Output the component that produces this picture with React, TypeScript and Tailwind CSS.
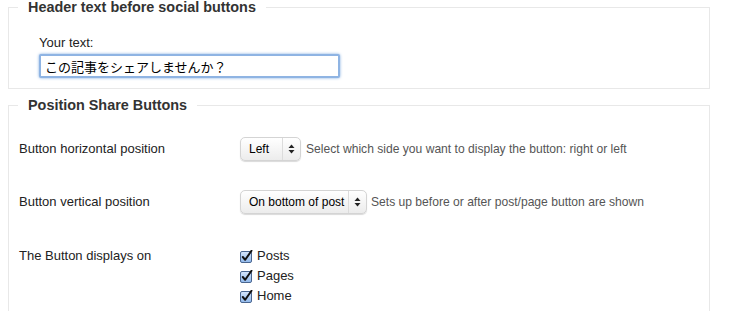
import React from 'react';

const font = { fontFamily: '"Liberation Sans", Arial, "Noto Sans CJK JP", sans-serif' };

function Select({ value, width }: { value: string; width: string }) {
  return (
    <div
      className={`flex h-[24px] ${width} shrink-0 items-center whitespace-nowrap rounded-[5px] border border-[#d4d4d4] bg-gradient-to-b from-white to-[#ececec] shadow-[0_1px_1px_rgba(0,0,0,0.15)] text-[12px] text-black`}
    >
      <span className="flex-1 pl-[8px] leading-[22px]">{value}</span>
      <span className="flex h-full w-[18px] flex-col items-center justify-center border-l border-[#dcdcdc]">
        <svg width="7" height="10" viewBox="0 0 7 10">
          <path d="M3.5 0.5 L6.5 4 L0.5 4 Z" fill="#222" />
          <path d="M3.5 9.5 L6.5 6 L0.5 6 Z" fill="#222" />
        </svg>
      </span>
    </div>
  );
}

function Checkbox({ label }: { label: string }) {
  return (
    <label className="flex h-[20px] items-center gap-[4px] text-[13px] text-[#222]">
      <svg width="13" height="13" viewBox="0 0 13 13">
        <defs>
          <linearGradient id="cb" x1="0" y1="0" x2="0" y2="1">
            <stop offset="0" stopColor="#d6e6fb" />
            <stop offset="1" stopColor="#8fb7ea" />
          </linearGradient>
        </defs>
        <rect x="0.5" y="1.5" width="11" height="11" rx="1.5" fill="url(#cb)" stroke="#4a6690" />
        <path d="M2.8 7 L5.2 9.8 L11.5 0.8" fill="none" stroke="#111" strokeWidth="2" strokeLinejoin="round" strokeLinecap="round" />
      </svg>
      <span>{label}</span>
    </label>
  );
}

export default function App() {
  return (
    <div className="h-[311px] w-[731px] overflow-hidden bg-white pt-[1px] text-[13px] text-[#222]" style={font}>
      {/* Header text */}
      <fieldset className="ml-[8px] w-[702px] h-[88px] border border-[#e8e8e8] px-[10px]">
        <legend className="ml-[-1px] px-[10px] text-[14.4px] font-bold leading-[12px] text-[#333]">
          Header text before social buttons
        </legend>
        <div className="ml-[20px] mt-[22px] leading-[16px]">Your text:</div>
        <input
          readOnly
          value="この記事をシェアしませんか？"
          className="ml-[20px] mt-[3px] h-[24px] w-[301px] rounded-[2px] border-2 border-[#8fb4e3] bg-white px-[4px] text-[13px] text-black shadow-[0_0_3px_#7eaae0] outline-none"
          style={font}
        />
      </fieldset>

      {/* Position */}
      <fieldset className="ml-[8px] mt-[10px] w-[702px] h-[230px] border border-[#e8e8e8] px-[10px]">
        <legend className="ml-[-1px] px-[10px] text-[14.4px] font-bold leading-[12px] text-[#333]">
          Position Share Buttons
        </legend>

        <div className="mt-[26px] flex items-center">
          <div className="w-[221px] shrink-0">Button horizontal position</div>
          <Select value="Left" width="w-[61px]" />
          <span className="ml-[5px] whitespace-nowrap text-[12.1px] text-[#555]">
            Select which side you want to display the button: right or left
          </span>
        </div>

        <div className="mt-[29px] flex items-center">
          <div className="w-[221px] shrink-0">Button vertical position</div>
          <Select value="On bottom of post" width="w-[127px]" />
          <span className="ml-[4px] whitespace-nowrap text-[12.1px] text-[#555]">
            Sets up before or after post/page button are shown
          </span>
        </div>

        <div className="mt-[32px] flex items-start">
          <div className="w-[221px] shrink-0 leading-[20px]">The Button displays on</div>
          <div className="flex flex-col">
            <Checkbox label="Posts" />
            <Checkbox label="Pages" />
            <Checkbox label="Home" />
          </div>
        </div>
      </fieldset>
    </div>
  );
}
